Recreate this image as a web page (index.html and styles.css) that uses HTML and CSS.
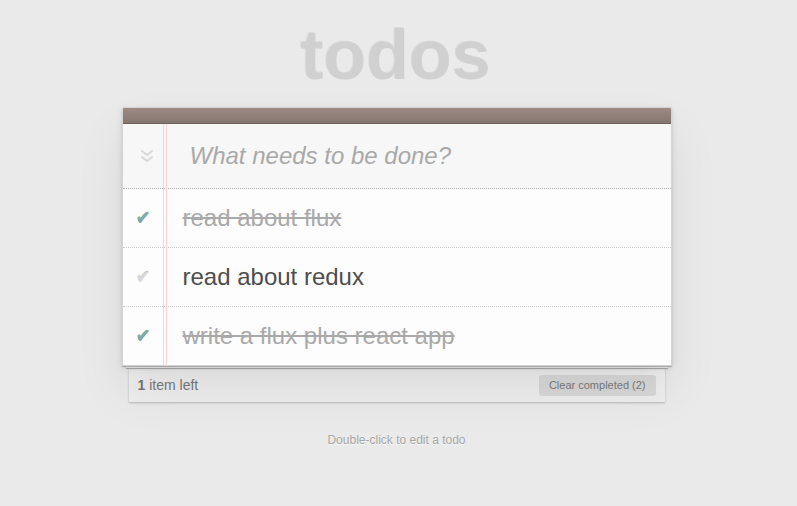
FILE: index.html
```html
<!DOCTYPE html>
<html>
<head>
<meta charset="utf-8">
<link rel="stylesheet" href="styles.css">
</head>
<body>
<div class="page">
  <h1 class="title">todos</h1>
  <section class="todoapp">
    <div class="topbar"></div>
    <div class="new-row">
      <span class="toggle-all">
        <svg width="14" height="16" viewBox="0 0 14 16"><path d="M2 2 L7 6 L12 2 M2 8 L7 12 L12 8" fill="none" stroke="#d9d9d9" stroke-width="2.2" stroke-linecap="round" stroke-linejoin="round"/></svg>
      </span>
      <span class="placeholder">What needs to be done?</span>
    </div>
    <ul class="todo-list">
      <li class="item done"><span class="toggle">✔</span><span class="label">read about flux</span></li>
      <li class="item"><span class="toggle">✔</span><span class="label">read about redux</span></li>
      <li class="item done"><span class="toggle">✔</span><span class="label">write a flux plus react app</span></li>
    </ul>
  </section>
  <div class="sheet"></div>
  <footer class="footer">
    <span class="count"><strong>1</strong> item left</span>
    <span class="clear">Clear completed (2)</span>
  </footer>
  <p class="info">Double-click to edit a todo</p>
</div>
</body>
</html>
```
FILE: styles.css
```css
html, body {
  margin: 0;
  padding: 0;
}
body {
  background: #eaeaea;
  color: #4d4d4d;
  font: 14px "Liberation Sans", Arial, sans-serif;
  line-height: 1.4em;
  padding-right: 4px;
}
.page {
  width: 550px;
  margin: 0 auto;
  display: flex;
  flex-direction: column;
}
.title {
  margin: 20px 0 17px;
  padding-right: 2px;
  font-size: 70px;
  line-height: 70px;
  font-weight: bold;
  text-align: center;
  color: #d0d0d0;
  text-shadow: -1px -1px 0 rgba(0, 0, 0, 0.06);
}
.todoapp {
  position: relative;
  background: #fff;
  border: 1px solid #d4d4d4;
  border-bottom: 0;
  border-radius: 2px 2px 0 0;
  box-shadow: 0 1px 1px rgba(0, 0, 0, 0.25), 0 2px 6px 0 rgba(0, 0, 0, 0.1), 0 25px 50px 0 rgba(0, 0, 0, 0.08);
  z-index: 2;
}
.todoapp::before {
  content: "";
  position: absolute;
  top: 0;
  bottom: 0;
  left: 40px;
  width: 2px;
  border-left: 1px solid #f2d2d2;
  border-right: 1px solid #f2d2d2;
  z-index: 1;
}
.topbar {
  position: relative;
  z-index: 3;
  height: 15px;
  border-bottom: 1px solid #6c615c;
  background: linear-gradient(#9d8b83, #857670);
  border-radius: 1px 1px 0 0;
}
.new-row {
  display: flex;
  align-items: center;
  height: 64px;
  background: #f7f7f7;
  border-bottom: 1px dotted #adadad;
}
.toggle-all {
  width: 48px;
  display: flex;
  justify-content: center;
  padding-top: 2px;
}
.toggle-all svg {
  display: block;
}
.placeholder {
  margin-left: 19px;
  font-size: 24px;
  line-height: 32px;
  font-style: italic;
  color: #a9a9a9;
}
.todo-list {
  list-style: none;
  margin: 0;
  padding: 0;
}
.item {
  display: flex;
  align-items: center;
  border-bottom: 1px dotted #cccccc;
  background: #fdfdfd;
}
.item:last-child {
  border-bottom: 1px solid #d0d0d0;
}
.toggle {
  width: 41px;
  text-align: center;
  font-family: "DejaVu Sans", sans-serif;
  font-size: 18px;
  color: #d9d9d9;
  text-shadow: 0 -1px 0 #bfbfbf;
}
.item.done .toggle {
  color: #85ada7;
  text-shadow: 0 1px 0 #669991;
  position: relative;
  top: -1px;
}
.label {
  display: block;
  margin-left: 4px;
  padding: 15px 60px 15px 15px;
  font-size: 24px;
  line-height: 28px;
  white-space: pre;
  color: #4d4d4d;
}
.item.done .label {
  color: #a9a9a9;
  text-decoration: line-through;
}
.sheet {
  height: 2px;
  margin: 0 4px;
  background: #f6f6f6;
  box-shadow: 0 1px 1px rgba(0, 0, 0, 0.3);
  position: relative;
  z-index: 1;
}
.footer {
  margin: 0 7px;
  padding: 7px 9px;
  height: 20px;
  display: flex;
  justify-content: space-between;
  align-items: center;
  background: #eeeeee;
  box-shadow: 0 1px 2px rgba(0, 0, 0, 0.22);
  color: #777;
  font-size: 14px;
  line-height: 20px;
}
.count strong {
  font-weight: bold;
}
.clear {
  font-size: 11px;
  line-height: 21px;
  padding: 0 10px;
  border-radius: 3px;
  background: #d8d8d8;
  color: #7a7a7a;
}
.info {
  margin: 30px 0 0;
  text-align: center;
  font-size: 12px;
  line-height: 16.8px;
  color: #a6a6a6;
  text-shadow: 0 1px 0 rgba(255, 255, 255, 0.7);
}
```
